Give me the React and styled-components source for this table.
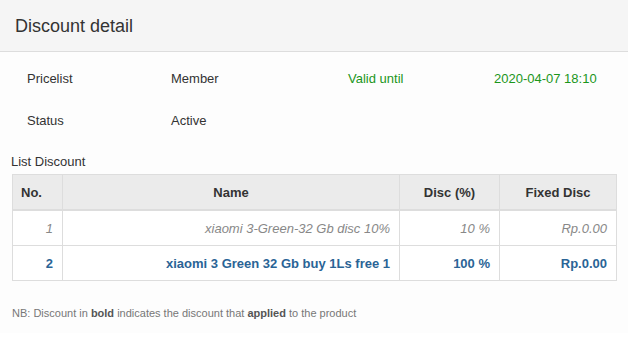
import React from 'react';
import styled, { createGlobalStyle } from 'styled-components';

const GlobalStyle = createGlobalStyle`
  body {
    margin: 0;
    background: #ffffff;
    font-family: "Liberation Sans", Arial, sans-serif;
    color: #333;
  }
`;

const Panel = styled.div`
  width: 628px;
  background: #fdfdfd;
  padding-bottom: 14px;
`;

const Header = styled.div`
  height: 52px;
  background: #f5f5f5;
  border-bottom: 1px solid #dddddd;
  padding: 0 15px;
  display: flex;
  align-items: center;
  box-sizing: border-box;
`;

const Title = styled.h3`
  margin: 0;
  font-size: 18px;
  font-weight: 400;
  color: #333;
  position: relative;
  top: 1px;
`;

const InfoGrid = styled.div`
  display: grid;
  grid-template-columns: 144px 177px 146px 1fr;
  grid-auto-rows: 42px;
  padding: 5px 0 0 27px;
  font-size: 13px;
  align-items: center;
`;

const InfoCell = styled.div`
  color: ${(p) => (p.$green ? '#1b961b' : '#333')};
`;

const Section = styled.div`
  padding: 13px 12px 0 12px;
`;

const Caption = styled.div`
  font-size: 13px;
  color: #333;
  margin-left: -1px;
  margin-bottom: 5px;
`;

const Table = styled.table`
  width: 604px;
  border-collapse: collapse;
  font-size: 13px;
  table-layout: fixed;
  background: #fff;
`;

const Th = styled.th`
  background: #ebebeb;
  height: 34px;
  border: 1px solid #dddddd;
  border-bottom: 2px solid #dddddd;
  font-weight: 700;
  color: #333;
  text-align: ${(p) => p.$align || 'center'};
  padding: 0 8px;
`;

const Td = styled.td`
  height: 34px;
  border: 1px solid #dddddd;
  text-align: right;
  padding: 0 9px;
  color: ${(p) => (p.$active ? '#2a6496' : '#888')};
  font-style: ${(p) => (p.$active ? 'normal' : 'italic')};
  font-weight: ${(p) => (p.$active ? 700 : 400)};
`;

const Note = styled.p`
  margin: 26px 0 0 0;
  font-size: 11px;
  color: #777;

  b {
    color: #555;
  }
`;

const rows = [
  { no: 1, name: 'xiaomi 3-Green-32 Gb disc 10%', disc: '10 %', fixed: 'Rp.0.00', active: false },
  { no: 2, name: 'xiaomi 3 Green 32 Gb buy 1Ls free 1', disc: '100 %', fixed: 'Rp.0.00', active: true },
];

const App = () => {
  return (
    <>
      <GlobalStyle />
      <Panel>
        <Header>
          <Title>Discount detail</Title>
        </Header>
        <InfoGrid>
          <InfoCell>Pricelist</InfoCell>
          <InfoCell>Member</InfoCell>
          <InfoCell $green>Valid until</InfoCell>
          <InfoCell $green>2020-04-07 18:10</InfoCell>
          <InfoCell>Status</InfoCell>
          <InfoCell>Active</InfoCell>
        </InfoGrid>
        <Section>
          <Caption>List Discount</Caption>
          <Table>
            <colgroup>
              <col style={{ width: 50 }} />
              <col style={{ width: 337 }} />
              <col style={{ width: 100 }} />
              <col style={{ width: 117 }} />
            </colgroup>
            <thead>
              <tr>
                <Th $align="left">No.</Th>
                <Th>Name</Th>
                <Th>Disc (%)</Th>
                <Th>Fixed Disc</Th>
              </tr>
            </thead>
            <tbody>
              {rows.map((r) => (
                <tr key={r.no}>
                  <Td $active={r.active}>{r.no}</Td>
                  <Td $active={r.active}>{r.name}</Td>
                  <Td $active={r.active}>{r.disc}</Td>
                  <Td $active={r.active}>{r.fixed}</Td>
                </tr>
              ))}
            </tbody>
          </Table>
          <Note>
            NB: Discount in <b>bold</b> indicates the discount that <b>applied</b> to the product
          </Note>
        </Section>
      </Panel>
    </>
  );
};

export default App;
